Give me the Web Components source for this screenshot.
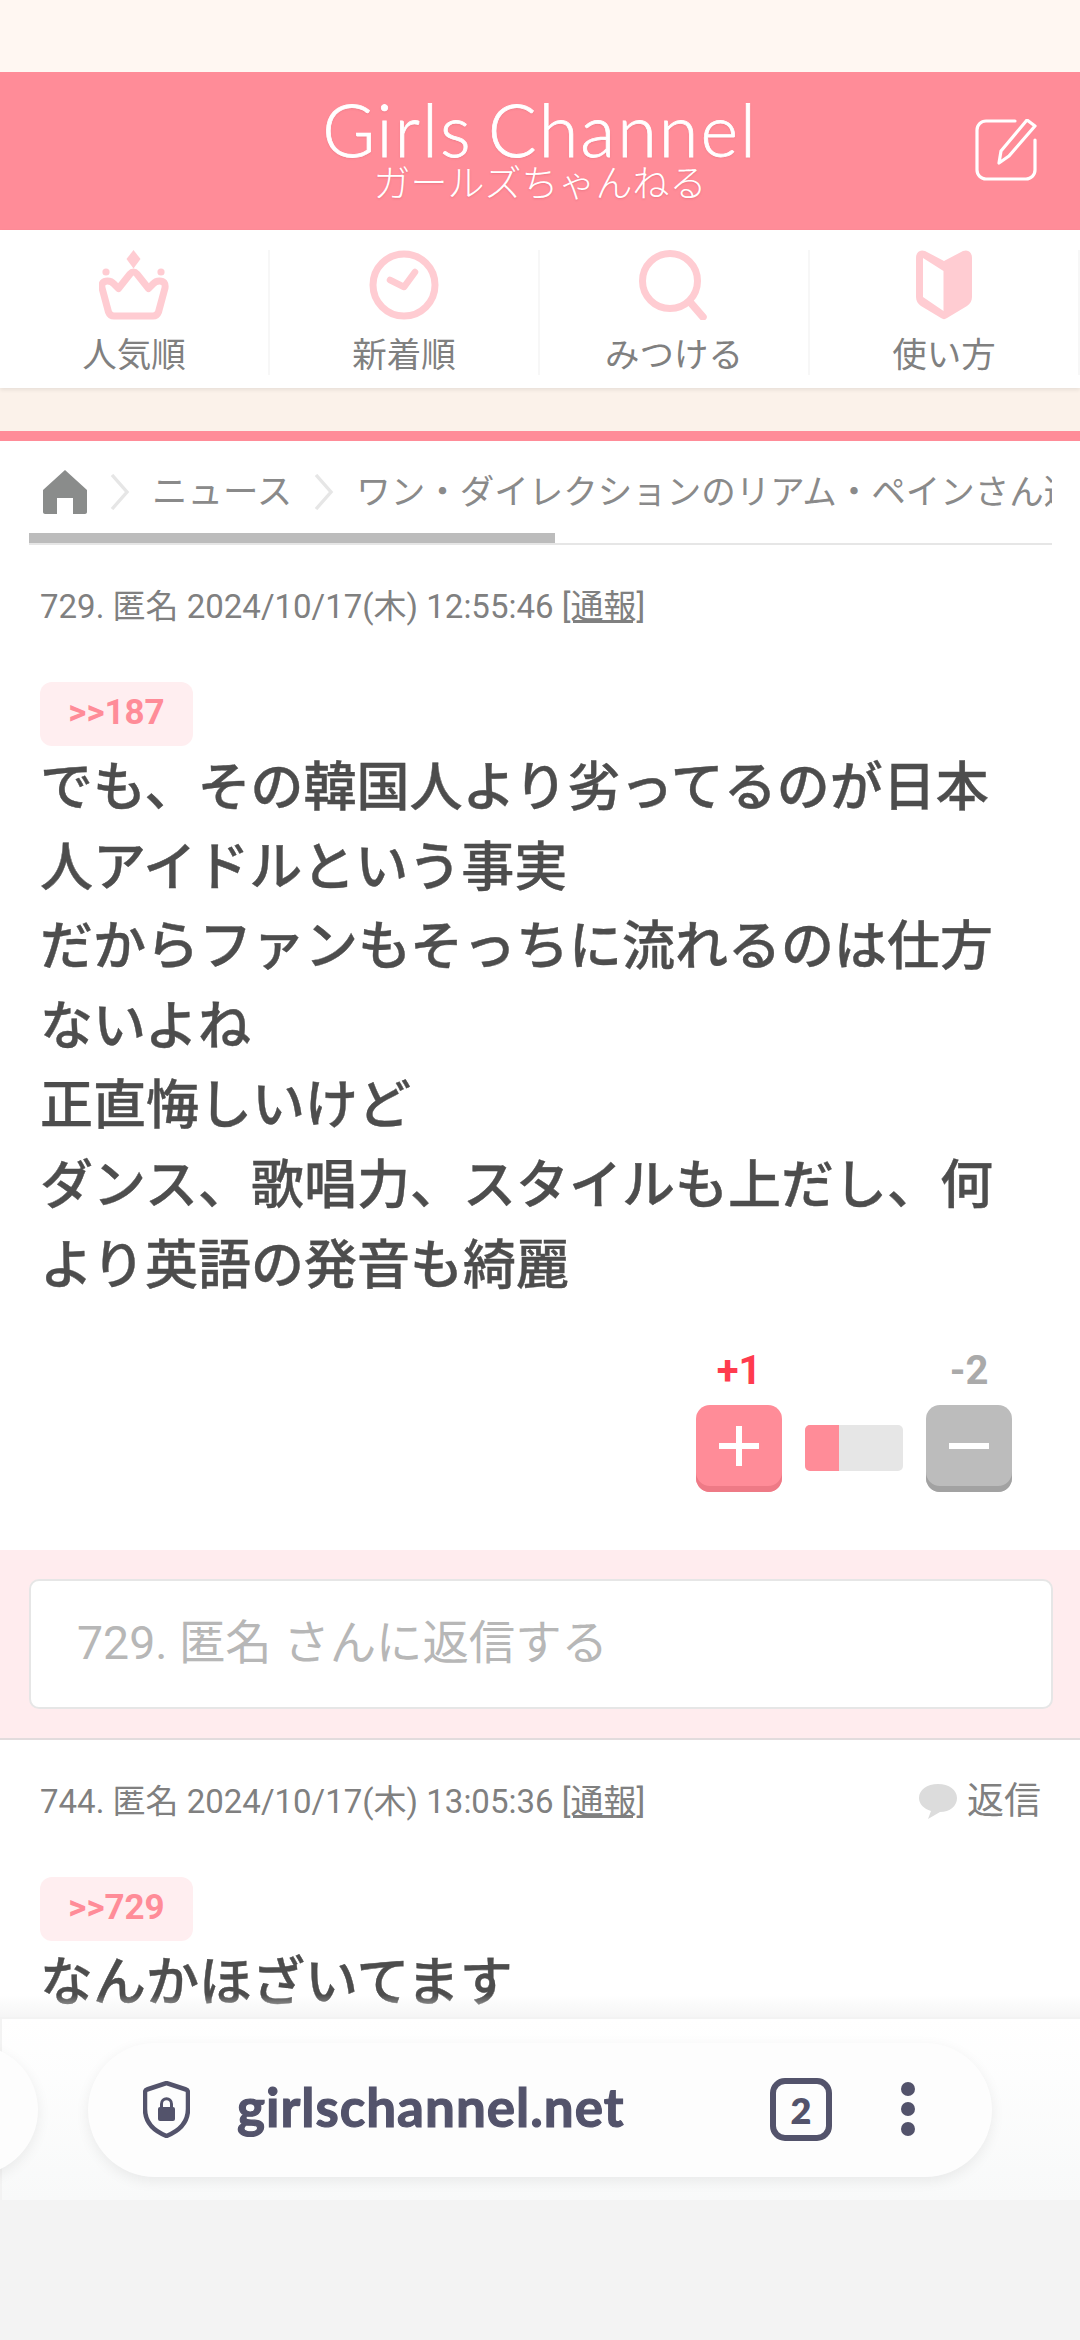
<!DOCTYPE html>
<html lang="ja">
<head>
<meta charset="utf-8">
<title>Girls Channel</title>
<style>
html,body{margin:0;padding:0;background:#fff;height:2340px;overflow:hidden}
body{width:1080px;font-family:Roboto,"Noto Sans CJK JP",sans-serif}
</style>
</head>
<body>
<gc-app>
  <gc-header></gc-header>
  <gc-tabs>
    <gc-tab icon="crown">人気順</gc-tab>
    <gc-tab icon="clock">新着順</gc-tab>
    <gc-tab icon="search">みつける</gc-tab>
    <gc-tab icon="book">使い方</gc-tab>
  </gc-tabs>
  <gc-crumbs></gc-crumbs>
  <gc-comment no="729" date="2024/10/17(木) 12:55:46" anchor="&gt;&gt;187">でも、その韓国人より劣ってるのが日本人アイドルという事実<br>だからファンもそっちに流れるのは仕方ないよね<br>正直悔しいけど<br>ダンス、歌唱力、スタイルも上だし、何より英語の発音も綺麗
    <gc-vote slot="vote" plus="+1" minus="-2"></gc-vote>
  </gc-comment>
  <gc-reply>729. 匿名 さんに返信する</gc-reply>
  <gc-comment no="744" date="2024/10/17(木) 13:05:36" anchor="&gt;&gt;729" replyable>なんかほざいてます</gc-comment>
</gc-app>
<gc-browser-bar></gc-browser-bar>

<script>
'use strict';

const CJK = 'Roboto,"Noto Sans CJK JP",sans-serif';

const ICONS = {
    crown: `<svg width="70" height="70" viewBox="0 0 70 70" fill="none" stroke="#ffccd2" stroke-width="7" stroke-linejoin="round" stroke-linecap="round">
        <path d="M15 66H54Q58 66 59.5 62L66 38Q67 31 60.5 31Q56.5 31 54 34L49.5 38.5L38 24Q34.5 20 31 24L19.5 38.5L15 34Q12.5 31 8.5 31Q2 31 3 38L9.5 62Q11 66 15 66Z"/>
        <path d="M34.5 0l7 9-7 9.5-7-9.5z" fill="#ffccd2" stroke="none"/>
        <circle cx="7" cy="22" r="3.6" fill="#ffccd2" stroke="none"/>
        <circle cx="62" cy="22" r="3.6" fill="#ffccd2" stroke="none"/>
    </svg>`,
    clock: `<svg width="70" height="70" viewBox="0 0 70 70" fill="none" stroke="#ffccd2" stroke-linecap="round" stroke-linejoin="round">
        <circle cx="35" cy="35" r="31" stroke-width="7"/>
        <path d="M21 30l14 7 11-15" stroke-width="6.5"/>
    </svg>`,
    search: `<svg width="70" height="70" viewBox="0 0 70 70" fill="none" stroke="#ffccd2" stroke-linecap="round">
        <circle cx="31" cy="31" r="27.5" stroke-width="7"/>
        <path d="M51 52l13 15" stroke-width="7.5"/>
    </svg>`,
    book: `<svg width="56" height="70" viewBox="0 0 56 70" fill="#ffccd2" fill-rule="evenodd">
        <path d="M0 8C0 2 4-1 9 1L28 11 47 1C52-1 56 2 56 8V47C56 51 54 54 51 56L31 68C29 69.5 27 69.5 25 68L5 56C2 54 0 51 0 47ZM7 8V47L27.5 61V21Z"/>
    </svg>`
};

function define(name, css, html) {
    customElements.define(name, class extends HTMLElement {
        constructor() {
            super();
            let shadowRoot = this.attachShadow({mode: 'open'});
            shadowRoot.innerHTML = `<style>${css}</style>${html}`;
        }
    });
}

define('gc-app', `
    :host{display:block;height:2340px;overflow:hidden;padding-top:72px;box-sizing:border-box;
        background:linear-gradient(#fff7f2 72px,#fff 72px)}
`, `<slot></slot>`);

define('gc-header', `
    :host{display:grid;grid-template-columns:1fr auto 1fr;height:158px;background:#ff8c98;color:#fff}
    .logo{grid-column:2;display:flex;flex-direction:column;align-items:center;padding-top:21px;text-shadow:0 1px 2px rgba(180,60,80,.25)}
    .en{font:300 72px/72px Lato,sans-serif;letter-spacing:2px;word-spacing:-6px;white-space:nowrap;-webkit-text-stroke:.8px #fff}
    .ja{font:300 37px/37px "Noto Sans CJK JP",sans-serif;margin-top:-2px;white-space:nowrap}
    .edit{justify-self:end;align-self:center;margin-right:43px;display:flex;margin-top:-2px}
`, `
    <div class="logo"><div class="en">Girls Channel</div><div class="ja">ガールズちゃんねる</div></div>
    <div class="edit"><svg width="62" height="62" viewBox="0 0 62 62" fill="none" stroke="#fff" stroke-width="3.2" stroke-linejoin="round" stroke-linecap="round">
        <path d="M40 2H11C6 2 2 6 2 11v40c0 5 4 9 9 9h40c5 0 9-4 9-9V21"/>
        <path d="M52 1l8 6-26 30-10 7 2-12z"/>
    </svg></div>
`);

define('gc-tabs', `
    :host{display:grid;grid-template-columns:repeat(4,1fr);height:158px;padding:20px 0 15px;box-sizing:border-box;background:#fff;
        box-shadow:0 2px 4px rgba(0,0,0,.08);position:relative}
`, `<slot></slot>`);

customElements.define('gc-tab', class extends HTMLElement {
    constructor() {
        super();
        let shadowRoot = this.attachShadow({mode: 'open'});
        shadowRoot.innerHTML = `
            <style>
                :host{display:flex;flex-direction:column;align-items:center;border-right:2px solid #f7f7f7;box-sizing:border-box;
                    font:400 34.5px/40px ${CJK};color:#808080}
                .ico{height:70px;display:flex;justify-content:center;margin-bottom:15px}
            </style>
            <div class="ico">${ICONS[this.getAttribute('icon')]}</div>
            <slot></slot>
        `;
    }
});

define('gc-crumbs', `
    :host{display:block;background:linear-gradient(#fbf2ea 43px,#ff8c98 43px,#ff8c98 53px,#fff 53px);padding:53px 28px 0 29px}
    .row{display:flex;align-items:center;height:92px;padding:10px 0 0 14px;overflow:hidden;white-space:nowrap;
        font:400 34.5px/40px ${CJK};color:#8a8a8a;box-sizing:border-box}
    .row svg{flex:none}
    .row span{flex:none}
    .track{height:12px;border-bottom:2px solid #e6e6e6;box-sizing:border-box}
    .thumb{width:526px;height:10px;background:#bcbcbc}
`, `
    <div class="row">
        <svg style="margin-right:23px" width="44" height="44" viewBox="0 0 44 44" fill="#8a8c8b"><path d="M22 0l22 20v22c0 1-1 2-2 2H30V28H14v16H2c-1 0-2-1-2-2V20z"/></svg>
        <svg width="20" height="36" viewBox="0 0 20 36" fill="none" stroke="#e6e6e6" stroke-width="3.4"><path d="M2 1l15 17L2 35"/></svg>
        <span style="margin:0 22px 0 22px;font-size:35.5px">ニュース</span>
        <svg width="20" height="36" viewBox="0 0 20 36" fill="none" stroke="#e6e6e6" stroke-width="3.4"><path d="M2 1l15 17L2 35"/></svg>
        <span style="margin-left:22px">ワン・ダイレクションのリアム・ペインさん逝去</span>
    </div>
    <div class="track"><div class="thumb"></div></div>
`);

customElements.define('gc-comment', class extends HTMLElement {
    constructor() {
        super();
        let shadowRoot = this.attachShadow({mode: 'open'});
        let reply = this.hasAttribute('replyable') ? `
            <div class="reply">
                <svg width="38" height="36" viewBox="0 0 38 36" fill="#dcdcdc"><path d="M19 0c11 0 19 6 19 14s-7 14-17 14l-12 7 3-8C5 25 0 20 0 14 0 6 8 0 19 0z"/></svg>
                <span>返信</span>
            </div>` : '';
        shadowRoot.innerHTML = `
            <style>
                :host{display:block;padding:40px 40px 0;background:#fff}
                .meta{display:flex;justify-content:space-between;align-items:center;height:44px;font:400 33px/44px ${CJK};color:#808080;white-space:nowrap}
                .meta u{text-underline-offset:2px}
                .reply{display:flex;align-items:center;gap:10px;font-size:37px;margin-right:-1px}
                .anchor{display:block;margin-top:53px;height:64px;width:153px;border-radius:12px;background:#ffeef0;
                    color:#ff8c98;font:700 35px/61px ${CJK};text-align:center}
                .body{font:500 53px/79.6px ${CJK};color:#4d4d4d;margin-top:3px;-webkit-text-stroke:.4px #4d4d4d}
            </style>
            <div class="meta">
                <span>${this.getAttribute('no')}. 匿名 ${this.getAttribute('date')} <u>[通報]</u></span>
                ${reply}
            </div>
            <div class="anchor">${this.getAttribute('anchor')}</div>
            <div class="body"><slot></slot></div>
            <slot name="vote"></slot>
        `;
    }
});

customElements.define('gc-vote', class extends HTMLElement {
    constructor() {
        super();
        let shadowRoot = this.attachShadow({mode: 'open'});
        shadowRoot.innerHTML = `
            <style>
                :host{display:grid;grid-template-columns:86px 98px 86px;column-gap:23px;justify-content:end;align-items:center;
                    padding:45px 28px 58px 0;font:700 40px/40px Roboto,sans-serif;-webkit-text-stroke:0}
                .plus{color:#ff3b4e;text-align:center}
                .minus{color:#aaa;text-align:center;grid-column:3}
                .btn{height:87px;border-radius:14px;display:flex;align-items:center;justify-content:center;padding-bottom:6px;box-sizing:border-box;margin-top:14px}
                .btn.p{background:#ff8c98;box-shadow:inset 0 -6px 0 #ee7a86}
                .btn.m{background:#bcbcbc;box-shadow:inset 0 -6px 0 #a2a2a2}
                .bar{height:46px;margin-top:12px;border-radius:5px;overflow:hidden;background:#e6e6e6;display:flex}
                .bar i{display:block;width:34px;background:#ff8c98}
            </style>
            <div class="plus">${this.getAttribute('plus')}</div>
            <div class="minus">${this.getAttribute('minus')}</div>
            <div class="btn p"><svg width="40" height="40" viewBox="0 0 40 40" fill="#fff"><path d="M17 0h6v17h17v6H23v17h-6V23H0v-6h17z"/></svg></div>
            <div class="bar"><i></i></div>
            <div class="btn m"><svg width="40" height="6" viewBox="0 0 40 6" fill="#fff"><path d="M0 0h40v6H0z"/></svg></div>
        `;
    }
});

define('gc-reply', `
    :host{display:block;background:#ffecee;padding:29px 27px 29px 29px;border-bottom:2px solid #e2dcdd}
    .box{height:130px;box-sizing:border-box;border:2px solid #e6e6e6;border-radius:10px;background:#fff;padding-left:46px;
        display:flex;align-items:center;font:400 46.4px/50px ${CJK};color:#b7b7b7;padding-bottom:3px}
`, `<div class="box"><slot></slot></div>`);

define('gc-browser-bar', `
    :host{display:block;position:absolute;left:0;top:2017px;width:1080px;height:323px;background:#f3f3f3}
    .fade{position:absolute;left:0;right:0;top:-22px;height:22px;background:linear-gradient(rgba(243,243,243,0),rgba(243,243,243,.8))}
    .strip{position:absolute;left:2px;right:0;top:2px;height:181px;background:linear-gradient(#fff,#f8f9f9)}
    .pill{position:absolute;border-radius:67px;background:#fdfdfd;box-shadow:0 4px 14px rgba(0,0,0,.07)}
    .prev{left:-200px;width:238px;top:28px;height:130px}
    .main{left:88px;width:904px;top:26px;height:134px;color:#53536b}
    .main>*{position:absolute}
    .shield{left:55px;top:38px}
    .url{left:149px;top:28.5px;font:700 53px/70px Lato,sans-serif;letter-spacing:1px;white-space:nowrap;-webkit-text-stroke:1.2px #53536b}
    .count{left:682px;top:35px;width:62px;height:63px;box-sizing:border-box;border:6px solid #53536b;border-radius:15px;
        display:flex;align-items:center;justify-content:center;font:800 36px/1 Lato,sans-serif}
    .dots{left:810px;top:39px}
`, `
    <div class="fade"></div>
    <div class="strip"></div>
    <div class="pill prev"></div>
    <div class="pill main">
        <svg class="shield" width="47" height="57" viewBox="0 0 47 57" fill="none">
            <path d="M23.5 2L43 8.5Q45 9 45 12V28C45 41 36 50 23.5 55C11 50 2 41 2 28V12Q2 9 4 8.5Z" stroke="#53536b" stroke-width="4.5" stroke-linejoin="round"/>
            <rect x="15" y="26" width="17" height="14" rx="2" fill="#53536b"/><path d="M18.5 27v-4c0-7 10-7 10 0v4" stroke="#53536b" stroke-width="3"/>
        </svg>
        <span class="url">girlschannel.net</span>
        <div class="count">2</div>
        <svg class="dots" width="20" height="54" viewBox="0 0 20 54" fill="#53536b"><circle cx="10" cy="7" r="7"/><circle cx="10" cy="27" r="7"/><circle cx="10" cy="47" r="7"/></svg>
    </div>
`);
</script>
</body>
</html>
